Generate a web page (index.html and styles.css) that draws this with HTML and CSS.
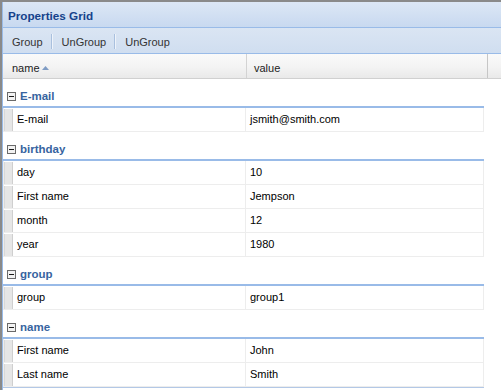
FILE: index.html
```html
<!DOCTYPE html>
<html>
<head>
<meta charset="utf-8">
<title>Properties Grid</title>
<link rel="stylesheet" href="styles.css">
</head>
<body>
<div class="window">
  <div class="panel">
    <div class="title">Properties Grid</div>
    <div class="toolbar">
      <span class="btn">Group</span><span class="sep"></span><span class="btn">UnGroup</span><span class="sep"></span><span class="btn">UnGroup</span>
    </div>
    <div class="grid">
      <div class="hd-row">
        <div class="hd hd-name">name<svg class="sort" width="7" height="4" viewBox="0 0 7 4"><path d="M3.5 0 L7 4 L0 4 Z" fill="#7f9cc4"/></svg></div>
        <div class="hd hd-value">value</div>
        <div class="hd hd-extra"></div>
      </div>
      <div class="body">
        <div class="group-hd"><div class="group-inner"><svg class="toggle" width="9" height="9" viewBox="0 0 9 9"><rect x="0.5" y="0.5" width="8" height="8" fill="#f2f2f2" stroke="#6a6a6a"/><rect x="2" y="4" width="5" height="1" fill="#1a1a1a"/></svg>E-mail</div></div>
        <div class="row"><div class="cell name"><span class="marker"></span>E-mail</div><div class="cell value">jsmith@smith.com</div></div>

        <div class="group-hd"><div class="group-inner"><svg class="toggle" width="9" height="9" viewBox="0 0 9 9"><rect x="0.5" y="0.5" width="8" height="8" fill="#f2f2f2" stroke="#6a6a6a"/><rect x="2" y="4" width="5" height="1" fill="#1a1a1a"/></svg>birthday</div></div>
        <div class="row"><div class="cell name"><span class="marker"></span>day</div><div class="cell value">10</div></div>
        <div class="row"><div class="cell name"><span class="marker"></span>First name</div><div class="cell value">Jempson</div></div>
        <div class="row"><div class="cell name"><span class="marker"></span>month</div><div class="cell value">12</div></div>
        <div class="row"><div class="cell name"><span class="marker"></span>year</div><div class="cell value">1980</div></div>

        <div class="group-hd"><div class="group-inner"><svg class="toggle" width="9" height="9" viewBox="0 0 9 9"><rect x="0.5" y="0.5" width="8" height="8" fill="#f2f2f2" stroke="#6a6a6a"/><rect x="2" y="4" width="5" height="1" fill="#1a1a1a"/></svg>group</div></div>
        <div class="row"><div class="cell name"><span class="marker"></span>group</div><div class="cell value">group1</div></div>

        <div class="group-hd"><div class="group-inner"><svg class="toggle" width="9" height="9" viewBox="0 0 9 9"><rect x="0.5" y="0.5" width="8" height="8" fill="#f2f2f2" stroke="#6a6a6a"/><rect x="2" y="4" width="5" height="1" fill="#1a1a1a"/></svg>name</div></div>
        <div class="row"><div class="cell name"><span class="marker"></span>First name</div><div class="cell value">John</div></div>
        <div class="row"><div class="cell name"><span class="marker"></span>Last name</div><div class="cell value">Smith</div></div>
      </div>
    </div>
  </div>
</div>
</body>
</html>
```
FILE: styles.css
```css
html, body {
  margin: 0;
  padding: 0;
  background: #fff;
}
body {
  font-family: "Liberation Sans", Arial, sans-serif;
  font-size: 11px;
  color: #000;
}
.window {
  width: 501px;
  height: 390px;
  overflow: hidden;
  box-sizing: border-box;
  border-top: 2px solid #8a8a8a;
  border-left: 2px solid #8a8a8a;
}
.panel {
  width: 520px;
  height: 100%;
  border-left: 1px solid #99bbe8;
}
.title {
  height: 25px;
  line-height: 28px;
  padding-left: 5px;
  border-bottom: 1px solid #99bbe8;
  background: linear-gradient(#dce7f5, #c8d9f0);
  color: #15428b;
  font-weight: bold;
  font-size: 11.7px;
}
.toolbar {
  height: 26px;
  box-sizing: border-box;
  padding: 2px 0 0 3px;
  display: flex;
  align-items: center;
  border-bottom: 1px solid #99bbe8;
  background: linear-gradient(#dae5f3, #d0def0);
  color: #333;
}
.btn {
  padding: 0 6px;
}
.sep {
  width: 0;
  height: 15px;
  margin: 0 3px 0 2px;
  border-left: 1px solid #a9c0de;
  border-right: 1px solid #eef3fa;
}
.hd-row {
  display: flex;
  height: 24px;
  border-bottom: 1px solid #d0d0d0;
  background: linear-gradient(#fafafa 0%, #f3f3f3 55%, #e9e9e9 100%);
  color: #222;
}
.hd {
  display: flex;
  align-items: center;
  padding-top: 3px;
  box-sizing: border-box;
}
.hd-name {
  width: 244px;
  padding-left: 9px;
  border-right: 1px solid #d3d3d3;
}
.hd-value {
  width: 241px;
  padding-left: 7px;
  border-right: 1px solid #c6c6c6;
}
.hd-extra {
  flex: 1;
}
.sort {
  margin-left: 2px;
  margin-top: 1px;
}
.body {
  width: 481px;
  border-bottom: 1px solid #b3c8e6;
}
.group-hd {
  padding-top: 6px;
  border-bottom: 2px solid #99bbe8;
}
.group-inner {
  display: flex;
  align-items: center;
  padding: 5px 4px 3px 4px;
  line-height: 13px;
  font-weight: bold;
  font-size: 11.5px;
  color: #3764a0;
}
.toggle {
  margin-right: 4px;
  flex: none;
}
.row {
  display: flex;
  height: 23px;
  border: 1px solid #ededed;
  border-top: none;
}
.cell {
  display: flex;
  align-items: center;
  line-height: 23px;
}
.cell.name {
  width: 241px;
  border-right: 1px solid #ededed;
}
.cell.value {
  flex: 1;
  padding-left: 4px;
}
.marker {
  align-self: stretch;
  width: 7px;
  margin: 1px 4px 0 0;
  border-left: 1px solid #d8d8d8;
  border-right: 1px solid #cfcfcf;
  background: #e6e6e6;
}
```
